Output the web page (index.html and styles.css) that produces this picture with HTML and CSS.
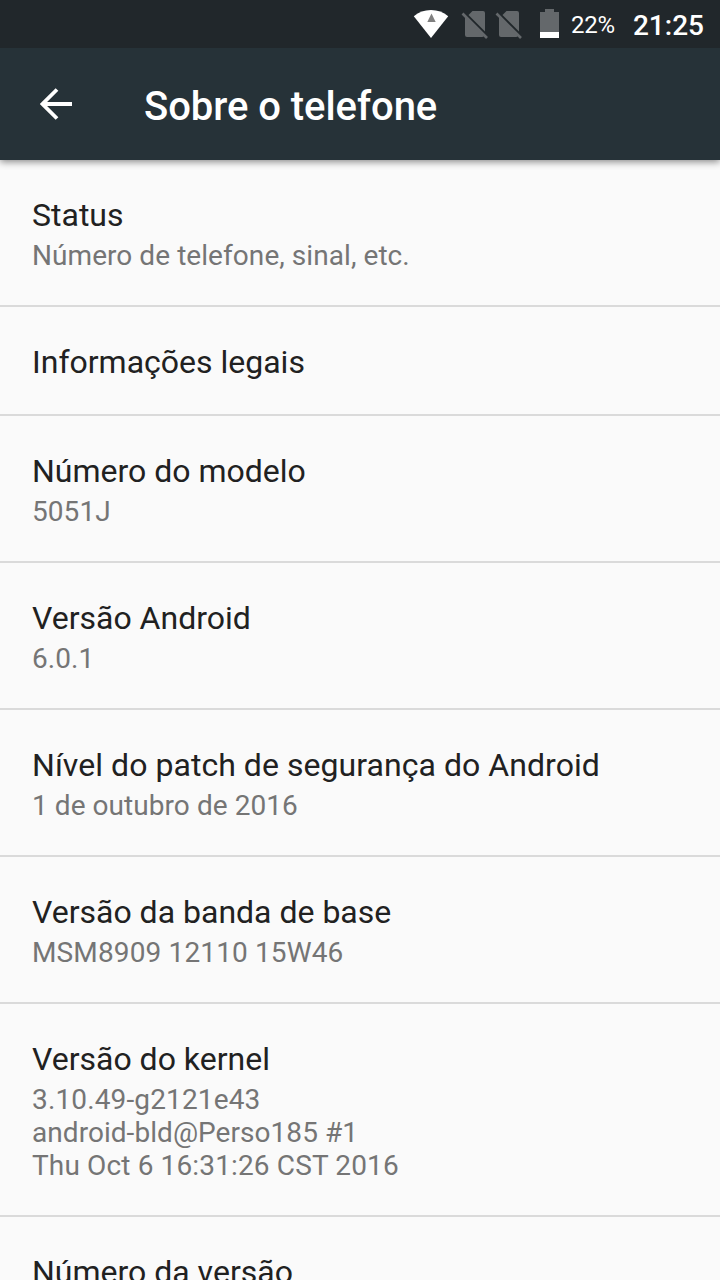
FILE: index.html
```html
<!DOCTYPE html>
<html lang="pt-BR">
<head>
<meta charset="utf-8">
<title>Sobre o telefone</title>
<link rel="stylesheet" href="styles.css">
</head>
<body>
<div class="screen">
  <div class="statusbar">
    <svg class="wifi" width="36" height="30" viewBox="413 9 36 30"><path d="M413.800 16.300Q421 10 431 10T448.200 16.300L431 38Z" fill="#fff"/><path d="M431.500 13.500L435.700 22H427.300Z" fill="#808080"/></svg>
    <svg class="sim" width="28" height="30" viewBox="461 9 28 30"><path d="M472.500 11H483Q485 11 485 13V31.500L468.500 15ZM465 16L484 35.500Q483.500 37 482 37H467Q465 37 465 35Z" fill="#64686b"/><path d="M462.500 13.500L487 38" stroke="#64686b" stroke-width="2.600"/></svg>
    <svg class="sim sim-second" width="28" height="30" viewBox="461 9 28 30"><path d="M472.500 11H483Q485 11 485 13V31.500L468.500 15ZM465 16L484 35.500Q483.500 37 482 37H467Q465 37 465 35Z" fill="#64686b"/><path d="M462.500 13.500L487 38" stroke="#64686b" stroke-width="2.600"/></svg>
    <svg class="battery" width="20" height="30" viewBox="0 0 20 30"><path d="M5 0H14V3H19V23H0V3H5Z" fill="#64686b"/><path d="M0 23H19V29H0Z" fill="#fff"/></svg>
    <span class="percent">22%</span>
    <span class="clock">21:25</span>
  </div>
  <header class="toolbar">
    <svg class="back" width="32" height="32" viewBox="0 0 32 32"><path d="M32 16H3M17 1.500L2.500 16L17 30.500" fill="none" stroke="#fff" stroke-width="3.800"/></svg>
    <h1 class="title">Sobre o telefone</h1>
  </header>
  <main class="list">
    <section class="item"><h2 class="name">Status</h2><p class="summary">Número de telefone, sinal, etc.</p></section>
    <section class="item"><h2 class="name">Informações legais</h2></section>
    <section class="item"><h2 class="name">Número do modelo</h2><p class="summary">5051J</p></section>
    <section class="item"><h2 class="name">Versão Android</h2><p class="summary">6.0.1</p></section>
    <section class="item"><h2 class="name name-long">Nível do patch de segurança do Android</h2><p class="summary">1 de outubro de 2016</p></section>
    <section class="item"><h2 class="name">Versão da banda de base</h2><p class="summary summary-wide">MSM8909 12110 15W46</p></section>
    <section class="item"><h2 class="name">Versão do kernel</h2><p class="summary summary-wide">3.10.49-g2121e43<br><span class="build-host">android-bld@Perso185 #1</span><br>Thu Oct 6 16:31:26 CST 2016</p></section>
    <section class="item"><h2 class="name">Número da versão</h2></section>
  </main>
</div>
</body>
</html>
```
FILE: styles.css
```css
body { margin: 0; font-family: Roboto, sans-serif; }
.screen { width: 720px; height: 1280px; overflow: hidden; display: flex; flex-direction: column; background: #fafafa; }
.statusbar { height: 48px; flex: none; box-sizing: border-box; display: flex; align-items: center; justify-content: flex-end; padding-right: 16px; background: #21272b; color: #fff; white-space: nowrap; }
.wifi { margin-right: 12px; }
.sim-second { margin-left: 6px; }
.battery { margin: 0 11px 0 17px; }
.percent { font-size: 24px; letter-spacing: -.2px; margin-right: 18px; padding-top: 2px; }
.clock { font-size: 28px; font-weight: 500; padding-top: 2px; }
.toolbar { height: 112px; flex: none; display: flex; align-items: center; background: #263238; color: #fff; box-shadow: 0 2px 7px rgba(0, 0, 0, .45); z-index: 1; clip-path: inset(0 0 -12px 0); }
.back { margin-left: 40px; }
.title { margin: 6px 0 0 72px; font-size: 40px; line-height: 48px; font-weight: 500; letter-spacing: -.05px; }
.list { flex: none; }
.item { box-sizing: border-box; padding: 36px 32px 33px; border-bottom: 2px solid #dadada; }
.name { margin: 0; font-size: 32px; line-height: 38px; font-weight: 400; color: #212121; }
.name-long { letter-spacing: .05px; }
.summary { margin: 5px 0 0; font-size: 28px; line-height: 33px; letter-spacing: .06px; color: #757575; }
.summary-wide { letter-spacing: .14px; }
.build-host { letter-spacing: .05px; }
```
